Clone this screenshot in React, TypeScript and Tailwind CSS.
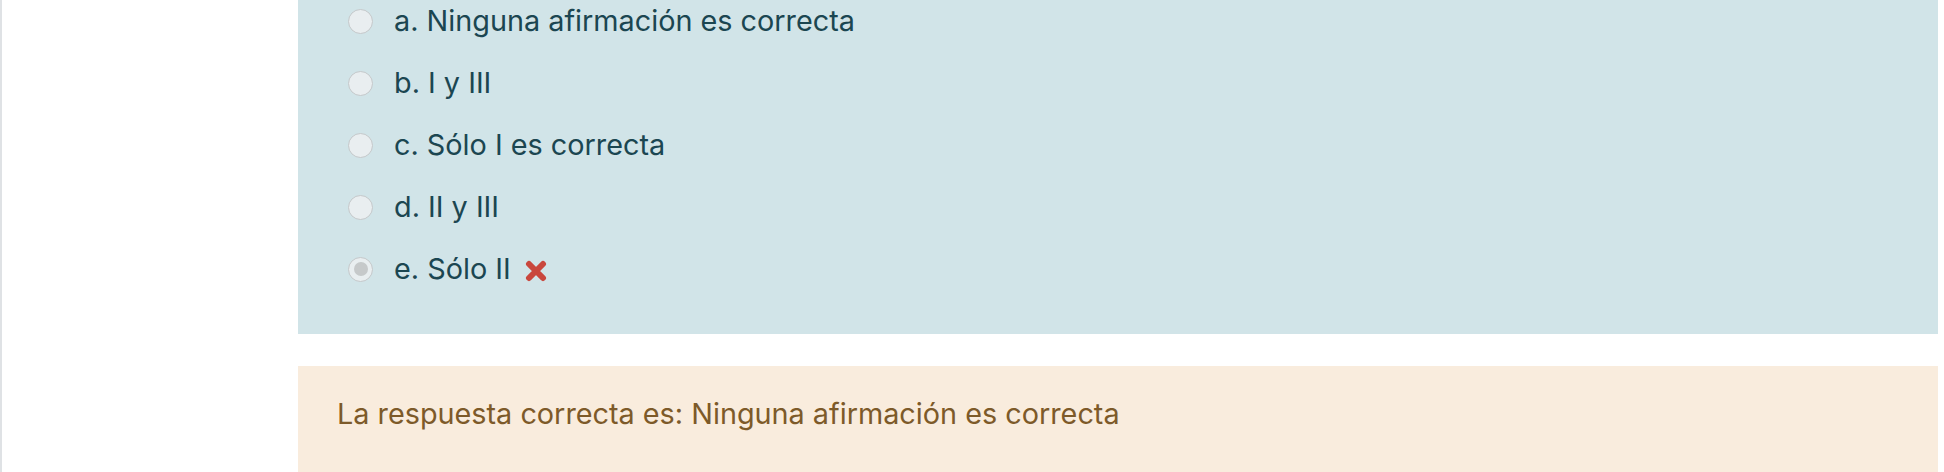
const OPTIONS = [
  { label: "a. Ninguna afirmación es correcta", checked: false },
  { label: "b. I y III", checked: false },
  { label: "c. Sólo I es correcta", checked: false },
  { label: "d. II y III", checked: false },
  { label: "e. Sólo II", checked: true },
];

function Radio({ checked }: { checked: boolean }) {
  return (
    <span className="flex h-[25px] w-[25px] shrink-0 items-center justify-center rounded-full border-[1.5px] border-[#c4c8ca] bg-[#e9eef0]">
      {checked && <span className="h-[14px] w-[14px] rounded-full bg-[#c6c9ca]" />}
    </span>
  );
}

function WrongIcon() {
  return (
    <svg width="22" height="22" viewBox="0 0 22 22" className="ml-[14px] mt-[4px]">
      <path d="M4 4L18 18M18 4L4 18" stroke="#c9473d" strokeWidth="6" strokeLinecap="round" />
    </svg>
  );
}

export default function App() {
  return (
    <div className="flex h-[472px] w-[1944px] overflow-hidden bg-white font-['Inter',sans-serif] text-[28.8px]">
      <div className="w-[2px] shrink-0 bg-[#dfe2e5]" />
      <div className="ml-[296px] flex w-[1640px] flex-col">
        <div className="flex flex-col gap-[20px] bg-[#d1e4e8] pb-[44px] pl-[50px] text-[#1b4651]">
          {OPTIONS.map((o) => (
            <div key={o.label} className="flex h-[42px] items-center">
              <Radio checked={o.checked} />
              <span className="ml-[21px] leading-[42px]">{o.label}</span>
              {o.checked && <WrongIcon />}
            </div>
          ))}
        </div>
        <div className="mt-[32px] flex-1 bg-[#f9ecdd] pl-[39px] pt-[27px] text-[#7d5a29]">
          <p className="leading-[42px]">La respuesta correcta es: Ninguna afirmación es correcta</p>
        </div>
      </div>
    </div>
  );
}
